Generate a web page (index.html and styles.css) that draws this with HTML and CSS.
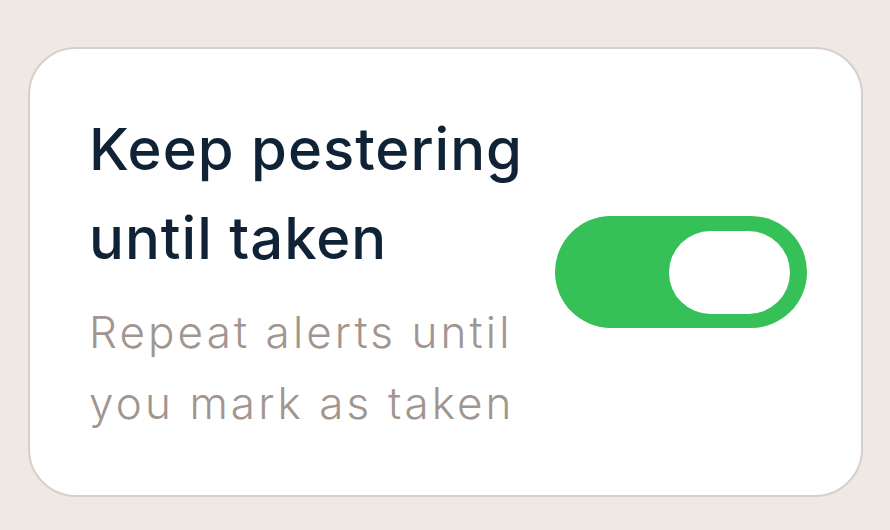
FILE: index.html
```html
<!DOCTYPE html>
<html lang="en">
<head>
    <meta charset="UTF-8">
    <meta name="viewport" content="width=device-width, initial-scale=1.0">
    <title>Reminder Settings</title>
    <link rel="stylesheet" href="styles.css">
</head>
<body>
    <div class="setting-card">
        <div class="setting-text">
            <h2 class="setting-title">Keep pestering<br>until taken</h2>
            <p class="setting-desc">Repeat alerts until<br>you mark as taken</p>
        </div>
        <!-- switch is on -->
        <div class="toggle on">
            <div class="knob"></div>
        </div>
    </div>
</body>
</html>
```

FILE: styles.css
```css
body {
    font-family: Inter, Lato, sans-serif;
    font-variant-ligatures: none;
    background-color: #efe9e6;
    margin: 0;
    padding: 47px 0 0 28px;
}
.setting-card {
    width: 835px;
    height: 450px;
    box-sizing: border-box;
    background-color: #fff;
    border: 2px solid #d8cfcb;
    border-radius: 48px;
    display: flex;
    align-items: center;
    justify-content: space-between;
    padding: 0 54px 0 59px;
}
.setting-title {
    margin: 0 0 14px;
    font-size: 58px;
    line-height: 89px;
    font-weight: 500;
    letter-spacing: 1px;
    color: #0f2236;
}
.setting-desc {
    margin: 0;
    font-size: 44px;
    line-height: 71px;
    font-weight: 300;
    letter-spacing: 3.1px;
    color: #a1968f;
}
.toggle {
    width: 252px;
    height: 112px;
    border-radius: 56px;
    background-color: #d9d2cf;
    display: flex;
    align-items: center;
    padding: 0 17px;
    box-sizing: border-box;
}
.toggle.on {
    background-color: #35c157;
    justify-content: flex-end;
}
.knob {
    width: 121px;
    height: 83px;
    border-radius: 42px;
    background-color: #fff;
}
```
